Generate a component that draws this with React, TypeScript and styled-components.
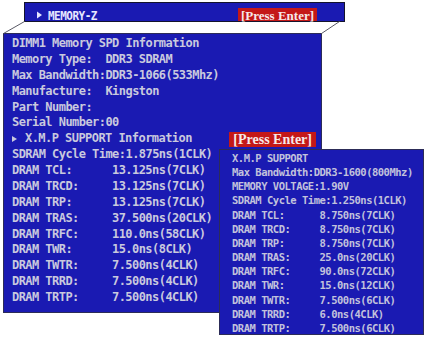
import React from 'react'
import styled, { createGlobalStyle } from 'styled-components'

const GlobalStyle = createGlobalStyle`
	html, body {
		margin: 0;
		padding: 0;
		background: #ffffff;
	}
`

const BIOS_BLUE = '#1a1ab2'

const Page = styled.div`
	position: relative;
	width: 428px;
	height: 337px;
	padding-top: 2px;
	box-sizing: border-box;
	overflow: hidden;
	background: #ffffff;
`

const TopBar = styled.div`
	margin-left: 24px;
	width: 321px;
	height: 20px;
	box-sizing: border-box;
	border: 1px solid #14142c;
	background: ${BIOS_BLUE};
	display: flex;
	align-items: flex-end;
	padding: 0 27px 0 12px;
`

const Arrow = styled.span<{ $gap: number }>`
	display: inline-block;
	width: 0;
	height: 0;
	border-left: 5px solid currentColor;
	border-top: 3px solid transparent;
	border-bottom: 3px solid transparent;
	margin-right: ${p => p.$gap}px;
	vertical-align: middle;
`

const BarTitle = styled.span`
	display: flex;
	align-items: center;
	height: 12px;
	font: bold 11px/1 'DejaVu Sans Mono', monospace;
	letter-spacing: -0.5px;
	color: #e6e6ff;
	transform: scaleY(1.15);
`

const PressEnter = styled.span<{ $size: number; $pad: number; $h: number }>`
	margin-left: auto;
	background: #c41818;
	color: #f6eaea;
	font: bold ${p => p.$size}px/1 'Liberation Serif', serif;
	letter-spacing: 0;
	padding: 1px ${p => p.$pad}px 0;
	box-sizing: border-box;
	height: ${p => p.$h}px;
	display: flex;
	align-items: center;
	white-space: pre;
`

const Panel = styled.div`
	box-sizing: border-box;
	border: 1px solid #2c2c58;
	background: ${BIOS_BLUE};
	font-family: 'DejaVu Sans Mono', monospace;
	font-weight: bold;
	white-space: pre;
`

const MainPanel = styled(Panel)`
	margin: 11px 0 0 3px;
	width: 319px;
	height: 280px;
	padding: 2px 5px 0 8px;
	font-size: 12px;
	line-height: 15.875px;
	letter-spacing: -0.55px;
	color: #c9c9de;
`

const XmpPanel = styled(Panel)`
	position: absolute;
	left: 219px;
	top: 149px;
	width: 205px;
	height: 186px;
	padding: 1px 0 0 12px;
	font-size: 10.5px;
	line-height: 14.17px;
	letter-spacing: -0.49px;
	color: #c2c2dc;
`

const Row = styled.div`
	display: flex;
	align-items: center;
	height: 1lh;
`

const TimingRow = styled.div<{ $label: number }>`
	display: grid;
	grid-template-columns: ${p => p.$label}px auto;
`

const Callouts = styled.svg`
	position: absolute;
	left: 0;
	top: 0;
	pointer-events: none;
`

const mainInfo = [
	'DIMM1 Memory SPD Information',
	'Memory Type:  DDR3 SDRAM',
	'Max Bandwidth:DDR3-1066(533Mhz)',
	'Manufacture:  Kingston',
	'Part Number:',
	'Serial Number:00',
]

const mainTimings: [string, string][] = [
	['DRAM TCL:', '13.125ns(7CLK)'],
	['DRAM TRCD:', '13.125ns(7CLK)'],
	['DRAM TRP:', '13.125ns(7CLK)'],
	['DRAM TRAS:', '37.500ns(20CLK)'],
	['DRAM TRFC:', '110.0ns(58CLK)'],
	['DRAM TWR:', '15.0ns(8CLK)'],
	['DRAM TWTR:', '7.500ns(4CLK)'],
	['DRAM TRRD:', '7.500ns(4CLK)'],
	['DRAM TRTP:', '7.500ns(4CLK)'],
]

const xmpInfo = [
	'X.M.P SUPPORT',
	'Max Bandwidth:DDR3-1600(800Mhz)',
	'MEMORY VOLTAGE:1.90V',
	'SDRAM Cycle Time:1.250ns(1CLK)',
]

const xmpTimings: [string, string][] = [
	['DRAM TCL:', '8.750ns(7CLK)'],
	['DRAM TRCD:', '8.750ns(7CLK)'],
	['DRAM TRP:', '8.750ns(7CLK)'],
	['DRAM TRAS:', '25.0ns(20CLK)'],
	['DRAM TRFC:', '90.0ns(72CLK)'],
	['DRAM TWR:', '15.0ns(12CLK)'],
	['DRAM TWTR:', '7.500ns(6CLK)'],
	['DRAM TRRD:', '6.0ns(4CLK)'],
	['DRAM TRTP:', '7.500ns(6CLK)'],
]

export default function App() {
	return (
		<Page>
			<GlobalStyle />
			<TopBar>
				<BarTitle>
					<Arrow $gap={6} />
					MEMORY-Z
				</BarTitle>
				<PressEnter $size={13} $pad={3} $h={13}>[Press Enter]</PressEnter>
			</TopBar>

			<MainPanel>
				{mainInfo.map(line => (
					<Row key={line}>{line}</Row>
				))}
				<Row>
					<Arrow $gap={8} />
					X.M.P SUPPORT Information
					<PressEnter $size={14} $pad={4} $h={15}>[Press Enter]</PressEnter>
				</Row>
				<Row>SDRAM Cycle Time:1.875ns(1CLK)</Row>
				{mainTimings.map(([label, value]) => (
					<TimingRow key={label} $label={100}>
						<span>{label}</span>
						<span>{value}</span>
					</TimingRow>
				))}
			</MainPanel>

			<XmpPanel>
				{xmpInfo.map(line => (
					<Row key={line}>{line}</Row>
				))}
				{xmpTimings.map(([label, value]) => (
					<TimingRow key={label} $label={87.5}>
						<span>{label}</span>
						<span>{value}</span>
					</TimingRow>
				))}
			</XmpPanel>

			<Callouts width={428} height={337}>
				<line x1={24.5} y1={21.5} x2={3.5} y2={33.5} stroke='#5a5a66' strokeWidth={1} />
				<line x1={339.5} y1={21.5} x2={321.5} y2={33.5} stroke='#5a5a66' strokeWidth={1} />
			</Callouts>
		</Page>
	)
}
